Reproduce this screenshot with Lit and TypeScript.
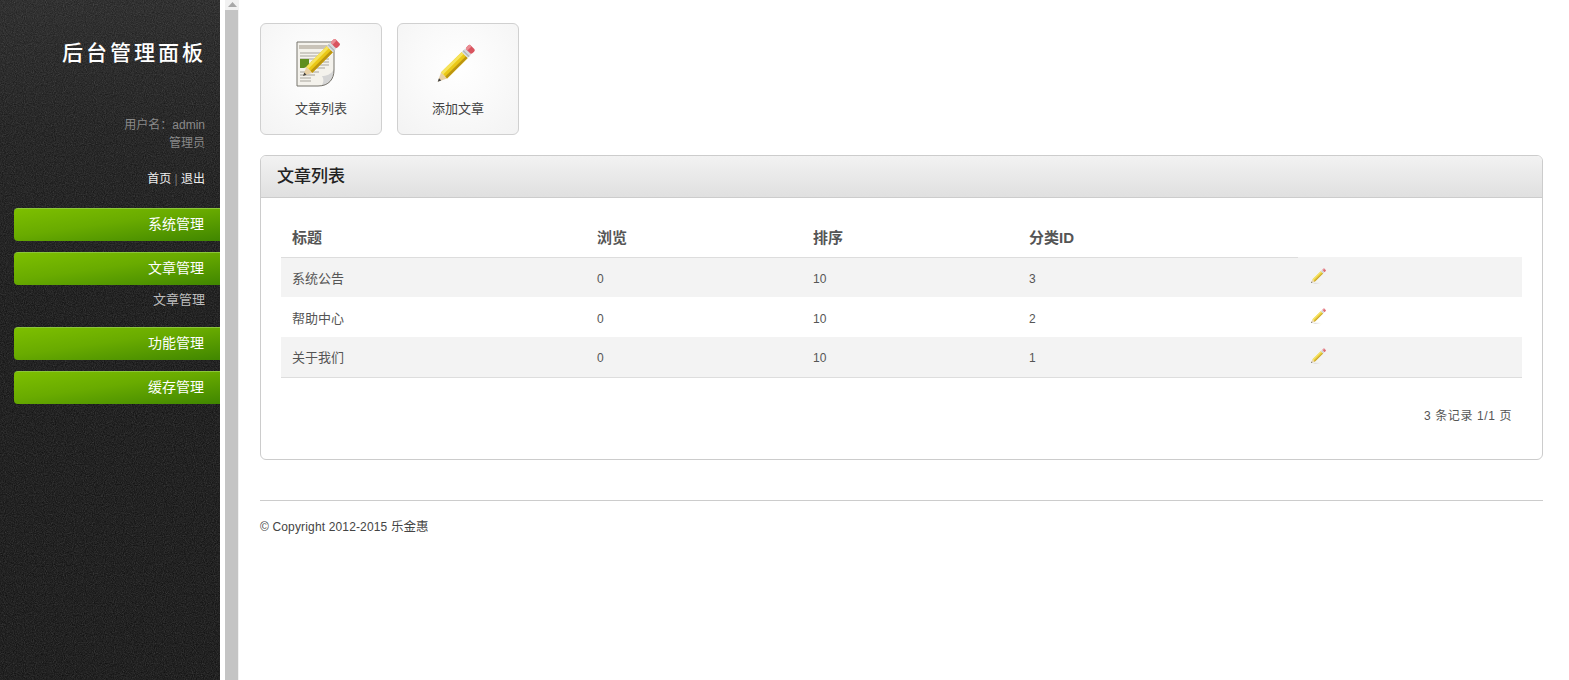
import { LitElement, html, css, svg } from "lit";
import { customElement } from "lit/decorators.js";

const rows = [
  { title: "系统公告", views: 0, order: 10, cat: 3 },
  { title: "帮助中心", views: 0, order: 10, cat: 2 },
  { title: "关于我们", views: 0, order: 10, cat: 1 },
];

const pencilBody = svg`
  <polygon points="0,0 9,-5 9,5" fill="#e8d0a4"/>
  <polygon points="0,0 3.4,-1.9 3.4,1.9" fill="#444"/>
  <polygon points="9,-5 38,-5 38,5 9,5" fill="#eac817"/>
  <polygon points="9,-5 38,-5 38,-1.6 9,-1.6" fill="#f6e35c"/>
  <polygon points="9,2 38,2 38,5 9,5" fill="#bd9510"/>
  <rect x="38" y="-5" width="5" height="10" fill="#d6dadc"/>
  <rect x="39.5" y="-5" width="1" height="10" fill="#a9afb2"/>
  <rect x="43" y="-5" width="6" height="10" rx="2" fill="#d9545f"/>
  <rect x="43" y="-5" width="6" height="3.5" rx="1.5" fill="#ea8d94"/>
`;

@customElement("app-root")
export class AppRoot extends LitElement {
  static styles = css`
    :host {
      display: block;
      width: 1569px;
      height: 680px;
      overflow: hidden;
      background: #fff;
      font-family: "Liberation Sans", "Noto Sans CJK SC", sans-serif;
      font-size: 12px;
      color: #555;
    }
    .layout { display: flex; height: 680px; }
    .sidebar {
      position: relative;
      flex: none;
      width: 220px;
      height: 680px;
      overflow: hidden;
      background: linear-gradient(180deg, #1e1e1e 0, #141414 130px, #0e0e0e 300px, #0c0c0c 100%);
      box-sizing: border-box;
    }
    .noise { position: absolute; inset: 0; width: 220px; height: 680px; opacity: 0.25; }
    .side-inner {
      position: relative;
      display: flex;
      flex-direction: column;
      align-items: stretch;
      text-align: right;
      padding-top: 39px;
    }
    .brand {
      height: 28px;
      line-height: 28px;
      padding-right: 14px;
      color: #fff;
      font-size: 21px;
      font-weight: 500;
      letter-spacing: 3px;
      white-space: nowrap;
    }
    .user {
      margin-top: 49px;
      padding-right: 15px;
      color: #8a8a8a;
      line-height: 18px;
    }
    .links {
      margin-top: 18px;
      padding-right: 15px;
      line-height: 18px;
      color: #eee;
      height: 18px;
    }
    .links span { color: #777; }
    .nav { margin-top: 20px; display: flex; flex-direction: column; margin-left: 14px; }
    .nav-item {
      height: 33px;
      line-height: 31px;
      box-sizing: border-box;
      padding-right: 16px;
      margin-bottom: 11px;
      color: #fff;
      font-size: 14px;
      border-radius: 4px 0 0 4px;
      border-top: 1px solid #8cc63a;
      background: linear-gradient(172deg, #7dbf00 0, #69ab00 45%, #408600 100%);
    }
    .nav-item.open { margin-bottom: 0; }
    .sub {
      height: 42px;
      padding-right: 15px;
      padding-top: 6px;
      box-sizing: border-box;
      line-height: 18px;
      font-size: 13px;
      color: #bdbdbd;
    }
    .gutter {
      flex: none;
      width: 19px;
      height: 680px;
      padding-left: 5px;
      box-sizing: border-box;
    }
    .track { width: 14px; height: 680px; background: #f1f1f1; display: flex; flex-direction: column; }
    .arrow { height: 10px; flex: none; display: flex; justify-content: center; padding-top: 2px; box-sizing: border-box; }
    .thumb { flex: 1; width: 13px; background: #c4c4c4; }
    .main {
      flex: 1;
      min-width: 0;
      padding: 23px 26px 0 21px;
      box-sizing: border-box;
    }
    .shortcuts { display: flex; gap: 15px; }
    .shortcut {
      width: 122px;
      height: 112px;
      box-sizing: border-box;
      border: 1px solid #d0d0d0;
      border-radius: 6px;
      background: radial-gradient(circle at 50% 40%, #ffffff 0, #fafafa 45%, #f3f3f3 100%);
      display: flex;
      flex-direction: column;
      align-items: center;
      color: #444;
    }
    .shortcut svg { display: block; margin-top: 15px; }
    .shortcut .label { margin-top: 11px; line-height: 18px; font-size: 13px; }
    .panel {
      margin-top: 20px;
      height: 305px;
      box-sizing: border-box;
      border: 1px solid #ccc;
      border-radius: 6px;
      overflow: hidden;
    }
    .panel-head {
      height: 42px;
      box-sizing: border-box;
      padding-left: 16px;
      line-height: 42px;
      font-size: 17px;
      font-weight: 500;
      color: #222;
      border-bottom: 1px solid #ccc;
      background: linear-gradient(180deg, #f2f2f2 0, #e0e0e0 100%);
    }
    .panel-body { padding: 20px 20px 0 20px; }
    table { width: 100%; border-collapse: collapse; table-layout: fixed; }
    th {
      height: 39px;
      padding: 0 0 2px 11px;
      box-sizing: border-box;
      text-align: left;
      font-size: 15px;
      font-weight: 700;
      color: #555;
      border-bottom: 1px solid #ddd;
    }
    th.none { border-bottom: none; }
    td { height: 40px; padding: 3px 0 0 11px; color: #555; box-sizing: border-box; }
    td.cjk { font-size: 13px; padding-top: 0; }
    td.act { padding-top: 0; }
    tbody tr:nth-child(odd) { background: #f3f3f3; }
    tbody tr:last-child td { border-bottom: 1px solid #ddd; }
    td svg { display: block; margin-top: -2px; }
    .pager { margin-top: 29px; padding-right: 10px; text-align: right; line-height: 18px; color: #555; letter-spacing: 0.6px; }
    .rule { margin-top: 40px; height: 1px; background: #ccc; }
    .copy { margin-top: 17px; line-height: 18px; color: #444; letter-spacing: 0.15px; }
    .copy span { font-size: 12.5px; letter-spacing: 0; }
  `;

  private largePencil() {
    return html`<svg width="50" height="50" viewBox="0 0 50 50">
      <g transform="translate(4.7 42.7) rotate(-44.7) scale(1 0.85)">${pencilBody}</g>
    </svg>`;
  }

  private docPencil() {
    return html`<svg width="50" height="50" viewBox="0 0 50 50">
      <g transform="translate(-5 0)">
        <path d="M6 3 H43 V31 C43 40 38 47 27 47 H6 Z" fill="#f4f2ec"/>
        <path d="M30 47 C38 46 43 40 43 30 C40 36 35 37 31 37 C33 40 33 44 30 47 Z" fill="#d5d5d5"/>
        <path d="M6 47 V3 H43 V31 C43 40 38 47 27 47 Z" fill="none" stroke="#77746c" stroke-width="1"/>
        <rect x="8" y="6" width="30" height="4" fill="#c9c3b8"/>
        <path d="M9 14 H38 M9 17 H38 M9 20 H38 M20 23 H38 M20 26 H38 M20 29 H34 M9 33 H28 M9 36 H24 M9 39 H20 M9 42 H20" stroke="#a7a49c" stroke-width="1"/>
        <polygon points="9,20 18,20 18,27 13,29 9,29" fill="#5f8e1e"/>
      </g>
      <g transform="translate(7 37) rotate(-45) scale(1 0.85)">${pencilBody}</g>
    </svg>`;
  }

  private smallPencil() {
    return html`<svg width="20" height="20" viewBox="0 0 20 20" opacity="0.85">
      <polygon points="2,16.5 12,17 6,18" fill="#ddd"/>
      <g transform="translate(2 17) rotate(-44) scale(0.4 0.32)">${pencilBody}</g>
    </svg>`;
  }

  render() {
    return html`
      <div class="layout">
        <aside class="sidebar">
          <svg class="noise" viewBox="0 0 220 680" aria-hidden="true">
            <filter id="grain"><feTurbulence type="fractalNoise" baseFrequency="0.9" numOctaves="2" seed="4"/><feColorMatrix type="saturate" values="0"/></filter>
            <rect width="220" height="680" filter="url(#grain)"/>
          </svg>
          <div class="side-inner">
            <div class="brand">后台管理面板</div>
            <div class="user">用户名：admin<br />管理员</div>
            <div class="links">首页 <span>|</span> 退出</div>
            <nav class="nav">
              <div class="nav-item">系统管理</div>
              <div class="nav-item open">文章管理</div>
              <div class="sub">文章管理</div>
              <div class="nav-item">功能管理</div>
              <div class="nav-item">缓存管理</div>
            </nav>
          </div>
        </aside>
        <div class="gutter">
          <div class="track">
            <div class="arrow"><svg width="9" height="5" viewBox="0 0 9 5"><polygon points="4.5,0 9,5 0,5" fill="#a8a8a8"/></svg></div>
            <div class="thumb"></div>
          </div>
        </div>
        <main class="main">
          <div class="shortcuts">
            <div class="shortcut">${this.docPencil()}<div class="label">文章列表</div></div>
            <div class="shortcut">${this.largePencil()}<div class="label">添加文章</div></div>
          </div>
          <section class="panel">
            <div class="panel-head">文章列表</div>
            <div class="panel-body">
              <table>
                <colgroup><col style="width:305px" /><col style="width:216px" /><col style="width:216px" /><col style="width:280px" /><col /></colgroup>
                <thead>
                  <tr><th>标题</th><th>浏览</th><th>排序</th><th>分类ID</th><th class="none"></th></tr>
                </thead>
                <tbody>
                  ${rows.map(
                    (r) => html`<tr>
                      <td class="cjk">${r.title}</td><td>${r.views}</td><td>${r.order}</td><td>${r.cat}</td>
                      <td class="act">${this.smallPencil()}</td>
                    </tr>`
                  )}
                </tbody>
              </table>
              <div class="pager">3 条记录 1/1 页</div>
            </div>
          </section>
          <div class="rule"></div>
          <div class="copy">© Copyright 2012-2015 <span>乐金惠</span></div>
        </main>
      </div>
    `;
  }
}
